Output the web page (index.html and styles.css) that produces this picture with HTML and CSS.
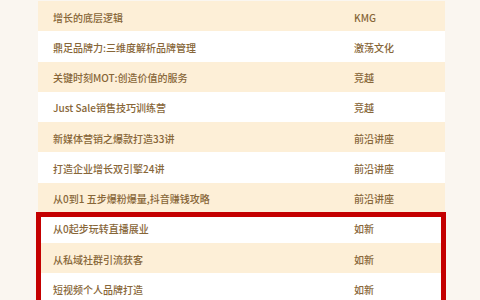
FILE: index.html
```html
<!DOCTYPE html>
<html lang="zh">
<head>
<meta charset="utf-8">
<link rel="stylesheet" href="styles.css">
</head>
<body>
<div class="table">
  <div class="row alt"><span class="name">增长的底层逻辑</span><span class="org">KMG</span></div>
  <div class="row"><span class="name">鼎足品牌力:三维度解析品牌管理</span><span class="org">激荡文化</span></div>
  <div class="row alt"><span class="name">关键时刻MOT:创造价值的服务</span><span class="org">竞越</span></div>
  <div class="row"><span class="name">Just Sale销售技巧训练营</span><span class="org">竞越</span></div>
  <div class="row alt"><span class="name">新媒体营销之爆款打造33讲</span><span class="org">前沿讲座</span></div>
  <div class="row"><span class="name">打造企业增长双引擎24讲</span><span class="org">前沿讲座</span></div>
  <div class="row alt"><span class="name">从0到1 五步爆粉爆量,抖音赚钱攻略</span><span class="org">前沿讲座</span></div>
  <div class="group highlight">
    <div class="row"><span class="name">从0起步玩转直播展业</span><span class="org">如新</span></div>
    <div class="row alt"><span class="name">从私域社群引流获客</span><span class="org">如新</span></div>
    <div class="row"><span class="name">短视频个人品牌打造</span><span class="org">如新</span></div>
  </div>
</div>
</body>
</html>
```
FILE: styles.css
```css
html {
  margin: 0;
  padding: 0;
  width: 480px;
  height: 300px;
  overflow: hidden;
  background: #faf6f0;
}
body {
  margin: 0;
  width: 480px;
  height: 300px;
  overflow: hidden;
  padding: 1px 35px 0 38px;
  box-sizing: border-box;
  font-family: "Noto Sans CJK SC", "Noto Sans", sans-serif;
  font-size: 10px;
  font-weight: 500;
  color: #876638;
}
.table {
  width: 407px;
}
.row {
  display: grid;
  grid-template-columns: 316px 1fr;
  align-items: center;
  height: 30.25px;
  padding-top: 2px;
  box-sizing: border-box;
  background: #ffffff;
  white-space: nowrap;
}
.row.alt {
  background: #fdefd7;
}
.name {
  padding-left: 15px;
}
.group.highlight {
  position: relative;
}
.group.highlight::after {
  content: "";
  position: absolute;
  top: -1px;
  left: -2px;
  right: -1px;
  bottom: -20px;
  border: 5px solid #c40000;
  pointer-events: none;
}
```
